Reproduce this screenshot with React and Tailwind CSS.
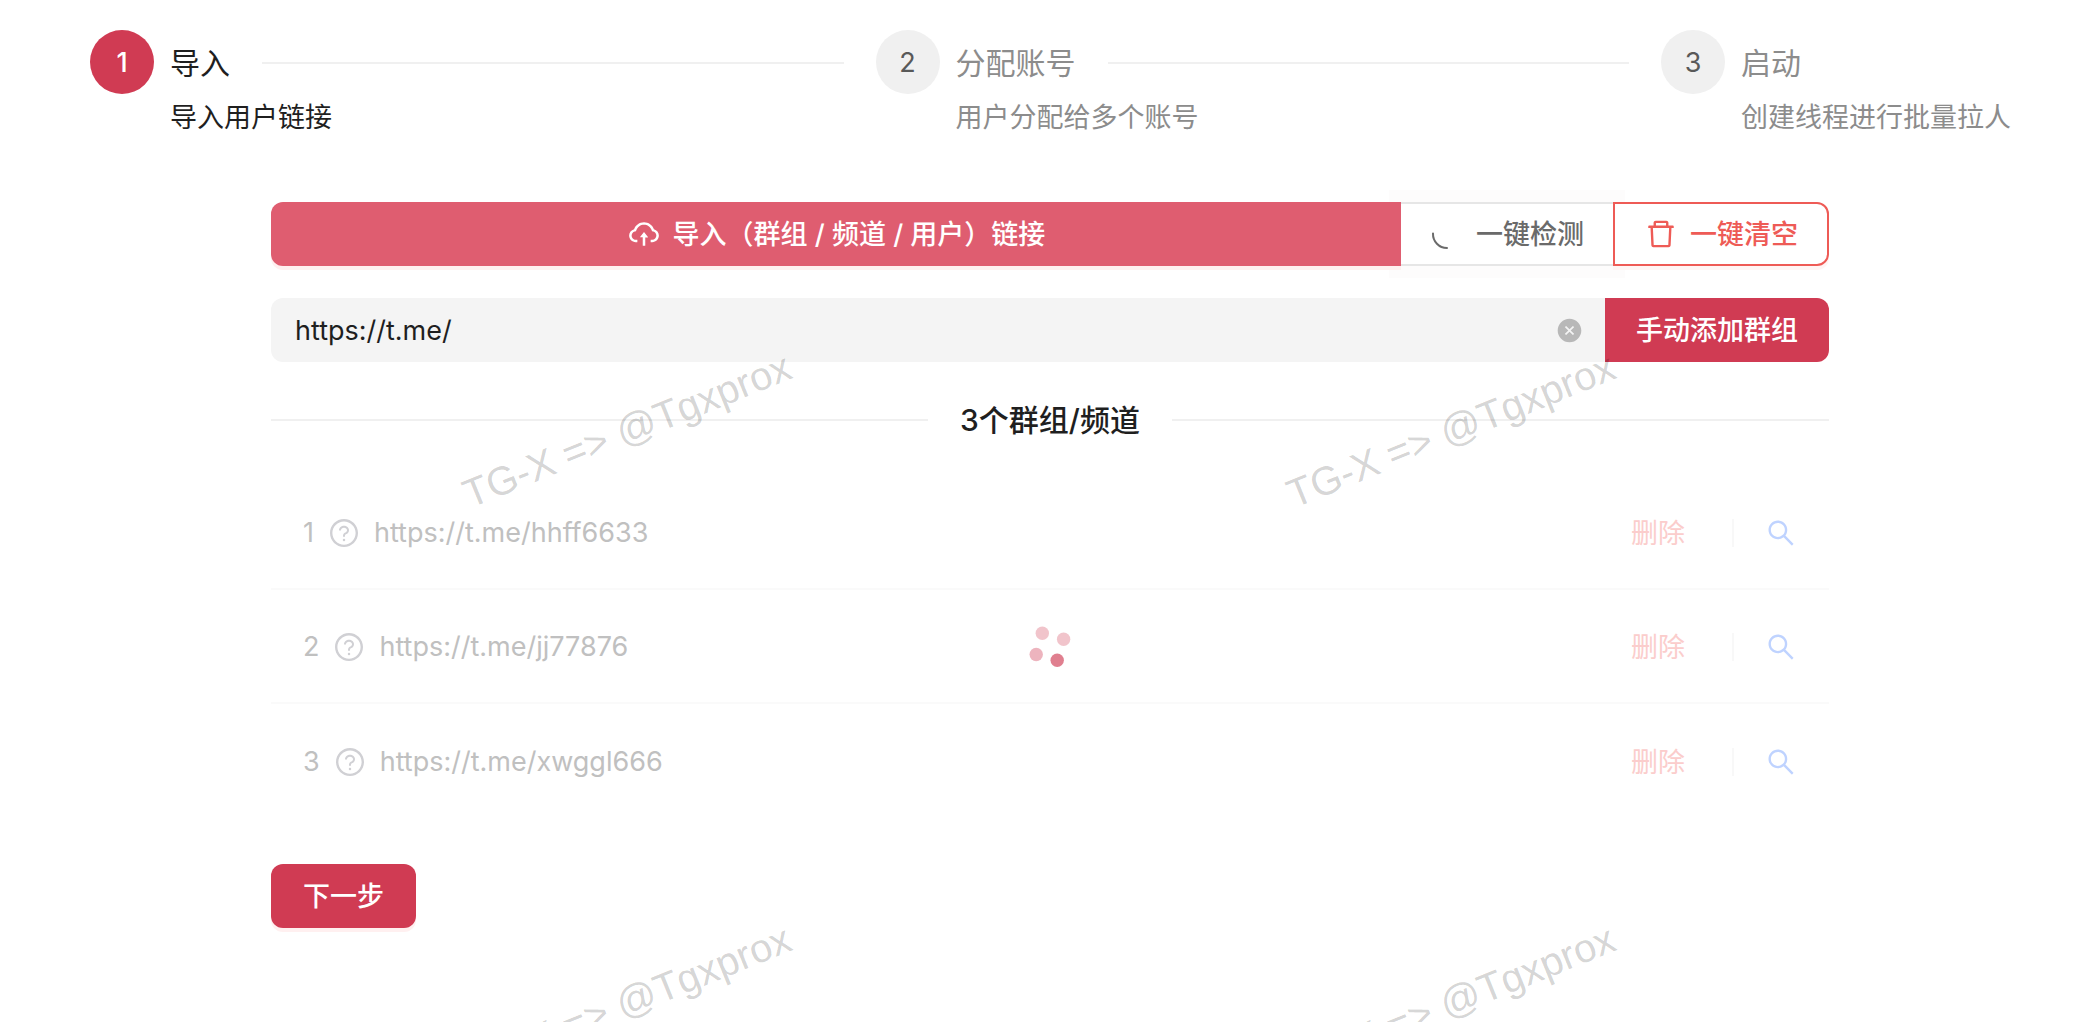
import { useState } from 'react';
import {
  AiFillCloseCircle,
  AiOutlineCloudUpload,
  AiOutlineDelete,
  AiOutlineQuestionCircle,
  AiOutlineSearch,
} from 'react-icons/ai';

const steps = [
  { title: '导入', description: '导入用户链接' },
  { title: '分配账号', description: '用户分配给多个账号' },
  { title: '启动', description: '创建线程进行批量拉人' },
];

const links = [
  'https://t.me/hhff6633',
  'https://t.me/jj77876',
  'https://t.me/xwggl666',
];

function Steps({ current }) {
  return (
    <ol className="flex gap-8">
      {steps.map((step, i) => {
        const active = i === current;
        const last = i === steps.length - 1;

        return (
          <li key={step.title} className={`flex gap-4 ${last ? 'flex-none' : 'flex-1'}`}>
            <span
              className={`flex size-16 flex-none items-center justify-center rounded-full pt-0.5 text-[27px]
              ${active ? 'bg-[#d03b53] font-medium text-white' : 'bg-[#f0f0f0] text-[#595959]'}`}
            >
              {i + 1}
            </span>
            <div className={`flex-1 ${active ? 'text-[#1f1f1f]' : 'text-[#8c8c8c]'}`}>
              <div className="flex h-[66px] items-center gap-8 text-[30px] whitespace-nowrap">
                {step.title}
                {!last && <span className="h-[2px] flex-1 bg-[#f0f0f0]" />}
              </div>
              <p className="text-[27px] leading-11 whitespace-nowrap">{step.description}</p>
            </div>
          </li>
        );
      })}
    </ol>
  );
}

// Quarter ring shown while a button is busy
function LoadingArc() {
  return (
    <svg viewBox="0 0 34 34" className="size-[34px]" fill="none" stroke="currentColor" strokeWidth="2">
      <path d="M3 16.5A14 14 0 0 0 17 31" strokeLinecap="round" />
    </svg>
  );
}

function Spinner() {
  return (
    <svg viewBox="0 0 42 42" className="size-[42px]" fill="#d03b53">
      <circle cx="13.3" cy="7.3" r="6.7" opacity="0.3" />
      <circle cx="34.6" cy="13.3" r="6.7" opacity="0.3" />
      <circle cx="7.2" cy="28.5" r="6.7" opacity="0.38" />
      <circle cx="28.2" cy="34.3" r="6.7" opacity="0.65" />
    </svg>
  );
}

function Watermark() {
  return (
    <div className="pointer-events-none absolute inset-0 overflow-hidden pt-[144px] pl-[215px]" aria-hidden="true">
      <div className="grid auto-rows-[572px] grid-cols-[824px_824px]">
        {[0, 1, 2, 3].map(n => (
          <div key={n} className="flex items-center justify-center">
            <span className="-rotate-22 font-['Liberation_Sans',sans-serif] text-[40px] whitespace-nowrap text-black/18">
              TG-X =&gt; @Tgxprox
            </span>
          </div>
        ))}
      </div>
    </div>
  );
}

function App() {
  const [link, setLink] = useState('https://t.me/');

  return (
    <div className="relative min-h-screen overflow-hidden bg-white pt-[30px] pr-[71px] pl-[90px] font-['Inter','Noto_Sans_CJK_SC',sans-serif] text-[27px] text-[#1f1f1f]">
      <Steps current={0} />

      <main className="mt-[62px] pr-[182px] pl-[181px]">

        {/* Import buttons */}
        <div className="flex h-16 font-medium">
          <button className="relative flex flex-1 items-center justify-center gap-3 rounded-l-xl bg-[#df5d70] text-white shadow-[0_4px_0_#fff0f0]">
            <AiOutlineCloudUpload className="size-[34px]" />
            <span className="pt-0.5">导入（群组 / 频道 / 用户）链接</span>
          </button>
          <button className="flex items-center gap-3 border-y-2 border-[#e6e6e6] bg-white px-[29px] text-[#6a6a6a] shadow-[0_0_0_12px_#fdfcfc]">
            <LoadingArc />
            <span className="pt-0.5">一键检测</span>
          </button>
          <button className="relative flex items-center gap-3 rounded-r-xl border-2 border-[#ee5b56] bg-white px-[29px] text-[#ee5b56] shadow-[0_4px_0_#fff5f4]">
            <AiOutlineDelete className="size-[34px]" />
            <span className="pt-0.5">一键清空</span>
          </button>
        </div>

        {/* Manual add */}
        <div className="mt-8 flex h-16">
          <div className="flex flex-1 items-center rounded-l-xl bg-[#f4f4f4] pr-[22px] pl-6">
            <input
              type="text"
              aria-label="群组链接"
              value={link}
              onChange={e => setLink(e.target.value)}
              className="min-w-0 flex-1 bg-transparent pt-0.5 outline-none"
            />
            <button aria-label="清除" onClick={() => setLink('')} className="text-[#b8b8b8]">
              <AiFillCloseCircle className="size-[27px]" />
            </button>
          </div>
          <button className="rounded-r-xl bg-[#d03b53] px-[31px] pt-0.5 font-medium text-white">
            手动添加群组
          </button>
        </div>

        {/* Section title */}
        <div className="mt-8 mb-[30px] flex h-[52px] items-center gap-8">
          <span className="h-[2px] flex-1 bg-[#f0f0f0]" />
          <h2 className="text-[30px] font-medium">3个群组/频道</h2>
          <span className="h-[2px] flex-1 bg-[#f0f0f0]" />
        </div>

        {/* Link list, faded while loading */}
        <div className="relative">
          <ul className="divide-y-2 divide-[#fafafa]">
            {links.map((item, i) => (
              <li key={item} className="flex h-[114px] items-center px-8 pt-0.5 text-[#c0c0c0]">
                <span>{i + 1}</span>
                <AiOutlineQuestionCircle className="mx-3.5 size-8 text-[#d0d0d4]" />
                <span>{item}</span>
                <div className="ml-auto flex items-center">
                  <button className="pt-0.5 text-[#fbcdcc]">删除</button>
                  <span className="mr-[31px] ml-[47px] h-7 w-[2px] bg-[#f8f8f8]" />
                  <button aria-label="搜索" className="text-[#bfd3ff]">
                    <AiOutlineSearch className="size-8" />
                  </button>
                </div>
              </li>
            ))}
          </ul>
          <div className="absolute inset-0 flex items-center justify-center">
            <Spinner />
          </div>
        </div>

        <button className="mt-[46px] h-16 rounded-xl bg-[#d03b53] px-8 pt-0.5 font-medium text-white shadow-[0_4px_0_#fff0f0]">
          下一步
        </button>
      </main>

      <Watermark />
    </div>
  );
}

export default App;
